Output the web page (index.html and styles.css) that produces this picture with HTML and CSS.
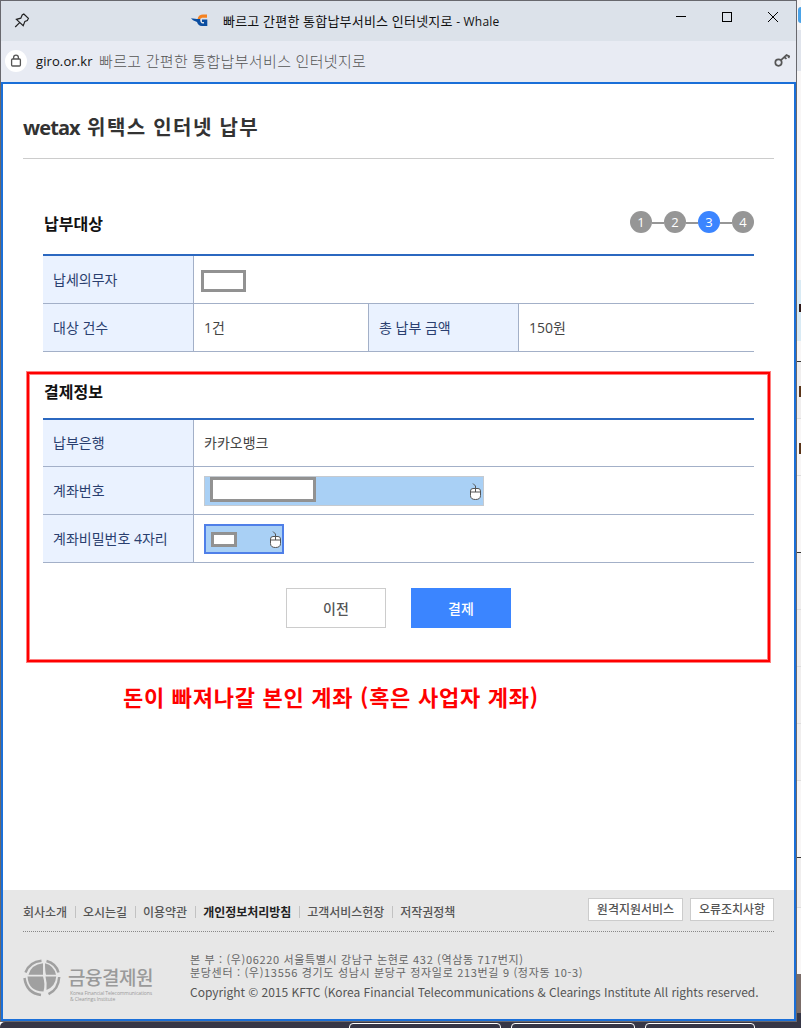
FILE: index.html
```html
<!DOCTYPE html>
<html lang="ko">
<head>
	<meta charset="UTF-8">
	<title>빠르고 간편한 통합납부서비스 인터넷지로</title>
	<link rel="stylesheet" href="styles.css">
</head>
<body>
<div class="screen">
	<div class="window">
		<header class="titlebar">
			<svg class="pin" width="16" height="16" viewBox="0 0 16 16"><path d="M9.8 1 L14.4 5.4 L13.3 7.6 L10.9 8.4 L9.2 12.8 L2.400 6.400 L6.800 5.200 L8.200 2 Z M5.400 9.800 L1.200 14"/></svg>
			<svg class="favicon" width="17" height="14" viewBox="0 0 17 14"><path class="org" d="M6.5 5.2 C7 2 9.5 .6 12 .6 H16 V3.8 H12 C10.4 3.8 9.8 4.4 9.2 5.2 Z"/><path class="blu" d="M0 4.2 L6 5 H9.2 C9 8 10 9.400 12 9.400 H13 V8 H11 V5.5 H16.3 V12 H11 C8 12 6.6 10 6 8 L2 6.2 Z"/></svg>
			<h1 class="tit">빠르고 간편한 통합납부서비스 인터넷지로 <span>- Whale</span></h1>
			<div class="ctrl">
				<svg width="12" height="12" viewBox="0 0 12 12"><path d="M1 5.5 H11"/></svg>
				<svg width="12" height="12" viewBox="0 0 12 12"><rect x="1.5" y="1.5" width="9" height="9"/></svg>
				<svg width="12" height="12" viewBox="0 0 12 12"><path d="M1 1 L11 11 M11 1 L1 11"/></svg>
			</div>
		</header>
		<div class="address">
			<span class="lock"><svg width="12" height="14" viewBox="0 0 12 14"><rect x="1.6" y="5" width="8.8" height="7" rx="1"/><path d="M3.6 5 V3.6 A2.4 2.4 0 0 1 8.4 3.6 V5"/></svg></span>
			<span class="host">giro.or.kr</span>
			<span class="desc">빠르고 간편한 통합납부서비스 인터넷지로</span>
			<svg class="key" width="16" height="15" viewBox="0 0 16 15"><circle cx="4.500" cy="9.600" r="3.200"/><path d="M7 7.200 L12.500 2 L15.200 3.400 L14.400 5 M10.600 4 L12.400 6"/></svg>
		</div>
		<div class="page">
			<main>
				<h2>wetax <span>위택스 인터넷 납부</span></h2>
				<section class="target">
					<div class="head">
						<h3>납부대상</h3>
						<ol class="step">
							<li>1</li>
							<li>2</li>
							<li class="on">3</li>
							<li>4</li>
						</ol>
					</div>
					<table>
						<colgroup><col class="c1"><col class="c2"><col class="c3"><col></colgroup>
						<tr><th>납세의무자</th><td colspan="3"><span class="mask m1"></span></td></tr>
						<tr><th>대상 건수</th><td>1건</td><th class="mid">총 납부 금액</th><td>150원</td></tr>
					</table>
				</section>
				<section class="pay">
					<h3>결제정보</h3>
					<table>
						<colgroup><col class="c1"><col></colgroup>
						<tr class="first"><th>납부은행</th><td>카카오뱅크</td></tr>
						<tr><th>계좌번호</th><td>
							<div class="field">
								<span class="mask m2"></span>
								<svg class="mouse" width="13" height="18" viewBox="0 0 13 18"><path class="body" d="M1.5 8 Q1.5 5.5 4 5.5 H9 Q11.5 5.5 11.5 8 V12.5 Q11.5 16.5 6.5 16.5 Q1.5 16.5 1.5 12.5 Z"/><path d="M1.5 9 H11.5 M6.5 9 V3 L4 .5"/></svg>
							</div>
						</td></tr>
						<tr><th>계좌비밀번호 4자리</th><td>
							<div class="field pw">
								<span class="mask m3"></span>
								<svg class="mouse" width="13" height="18" viewBox="0 0 13 18"><path class="body" d="M1.5 8 Q1.5 5.5 4 5.5 H9 Q11.5 5.5 11.5 8 V12.5 Q11.5 16.5 6.5 16.5 Q1.5 16.5 1.5 12.5 Z"/><path d="M1.5 9 H11.5 M6.5 9 V3 L4 .5"/></svg>
							</div>
						</td></tr>
					</table>
					<div class="btns">
						<button type="button">이전</button>
						<button type="button" class="blue">결제</button>
					</div>
				</section>
				<p class="note">돈이 빠져나갈 본인 계좌 (혹은 사업자 계좌)</p>
			</main>
			<footer>
				<div class="foot-top">
					<ul>
						<li>회사소개</li>
						<li>오시는길</li>
						<li>이용약관</li>
						<li class="strong">개인정보처리방침</li>
						<li>고객서비스헌장</li>
						<li>저작권정책</li>
					</ul>
					<div class="links">
						<a class="remote">원격지원서비스</a>
						<a class="error">오류조치사항</a>
					</div>
				</div>
				<div class="foot-btm">
					<div class="logo">
						<svg width="38" height="38" viewBox="0 0 38 38">
							<path d="M20 4.200 V15.800 H5.500 Q8 5.500 20 4.200 Z M22 4.200 Q31 6.500 33 15.800 H23 Q22 12 22 4.200 Z M4.500 17.600 H20 Q22.500 25 20.500 32.500 Q5.500 32.500 4.500 17.600 Z M22.500 17.600 H33.200 Q32.500 27.500 23.500 31 Q24.200 24 22.500 17.600 Z"/>
							<path class="arc" d="M2.500 13.500 Q6.500 3 18.500 1.800 M23.500 2 Q33 4.500 35.500 13.500 M1.500 19 Q3.500 34 18 36 M36.200 18 Q35.500 30.500 25.500 35.200"/>
						</svg>
						<div>
							<strong>금융결제원</strong>
							<small>Korea Financial Telecommunications<br>&amp; Clearings Institute</small>
						</div>
					</div>
					<address>
						<p class="a1">본 부 : (우)06220 서울특별시 강남구 논현로 432 (역삼동 717번지)</p>
						<p class="a2">분당센터 : (우)13556 경기도 성남시 분당구 정자일로 213번길 9 (정자동 10-3)</p>
						<p class="copy">Copyright © 2015 KFTC (Korea Financial Telecommunications &amp; Clearings Institute All rights reserved.</p>
					</address>
				</div>
			</footer>
		</div>
	</div>
	<!-- the page behind the popup -->
	<div class="behind">
		<i class="b1"></i>
		<i class="b2"></i>
		<i class="b3"></i>
		<i class="b4"><b></b></i>
		<i class="b5"></i>
		<i class="row g"><b></b></i>
		<i class="row"><b></b></i>
		<i class="row tall dark"></i>
		<i class="row g"></i>
		<i class="row g"></i>
		<i class="row g"></i>
		<i class="row g"></i>
		<i class="row tall dark"></i>
		<i class="row last g"></i>
		<i class="b9"></i>
		<i class="b10"></i>
		<i class="b11"></i>
	</div>
	<div class="under">
		<i class="u1"></i><i class="u2"></i><i class="u3"></i>
	</div>
	<div class="redbox"></div>
</div>
</body>
</html>
```
FILE: styles.css
```css
* {
	box-sizing: border-box;
}
body, h1, h2, h3, p, ul, ol {
	margin: 0;
	padding: 0;
}
body {
	font-family: "Open Sans", "Noto Sans CJK KR", sans-serif;
	font-size: 13px;
	color: #444;
	white-space: nowrap;
}
li {
	list-style: none;
}
svg {
	display: block;
	fill: none;
	stroke: #222;
}
.screen {
	position: relative;
	display: grid;
	grid-template-columns: 797px 4px;
	grid-template-rows: 1022px 6px;
	width: 801px;
	height: 1028px;
	overflow: hidden;
}
.window {
	display: flex;
	flex-direction: column;
	border: 1px solid #68686e;
}
.titlebar {
	display: flex;
	align-items: center;
	height: 40px;
	background: #dce2ea;
}
.pin {
	margin-left: 13px;
}
.pin path {
	stroke-width: 1.2;
}
.favicon {
	margin: 0 15px 0 161px;
	stroke: none;
}
.org {
	fill: #f58220;
}
.blu {
	fill: #0b4da0;
}
.tit {
	width: 288px;
	padding-top: 1px;
	font-size: 13px;
	font-weight: 400;
	letter-spacing: .2px;
	color: #111;
	line-height: 20px;
}
.tit span {
	font-size: 12px;
}
.ctrl {
	display: flex;
	gap: 34px;
	margin-left: 164px;
	padding-bottom: 8px;
}
.ctrl svg {
	stroke: #000;
}
.address {
	display: flex;
	align-items: center;
	height: 41px;
	padding-bottom: 2px;
	background: #e8ebf3;
}
.lock {
	display: flex;
	align-items: center;
	justify-content: center;
	width: 22px;
	height: 22px;
	margin: 0 9px 0 4px;
	border-radius: 50%;
	background: #fff;
}
.lock svg, .key {
	stroke: #555;
	stroke-width: 1.3;
}
.key {
	margin: 0 6px 0 auto;
	stroke-width: 1.7;
}
.host {
	width: 63px;
	font-size: 13px;
	letter-spacing: .1px;
	color: #111;
}
.desc {
	font-size: 15px;
	font-weight: 300;
	letter-spacing: .34px;
	color: #555;
}
.page {
	display: flex;
	flex-direction: column;
	flex: 1;
	border: 2px solid #1a6fd8;
	background: #fff;
}
main {
	flex: 1;
	padding: 0 20px;
}
h2 {
	height: 75px;
	padding-top: 28px;
	border-bottom: 1px solid #ccc;
	font-size: 20px;
	line-height: 32px;
	letter-spacing: -.9px;
	color: #333;
}
h2 span {
	margin-left: 3px;
	letter-spacing: 1.45px;
}
section {
	padding: 0 20px;
}
.head {
	display: flex;
	justify-content: space-between;
	height: 95px;
	padding-top: 52px;
}
h3 {
	padding-left: 1px;
	font-size: 16px;
	line-height: 26px;
	color: #111;
}
.step {
	display: flex;
}
.step li {
	display: flex;
	align-items: center;
	justify-content: center;
	width: 22px;
	height: 22px;
	border-radius: 50%;
	background: #969696;
	font-size: 13px;
	color: #fff;
}
.step li + li {
	margin-left: 12px;
}
.step li:not(:last-child):after {
	content: '';
	flex: none;
	width: 12px;
	height: 2px;
	margin: 2px -19px 0 7px;
	background: #969696;
}
.step .on {
	background: #3b85ff;
}
table {
	width: 711px;
	border-collapse: separate;
	border-spacing: 0;
	border-top: 2px solid #2b68c0;
	table-layout: fixed;
}
.c1 {
	width: 151px;
}
.c2 {
	width: 174px;
}
.c3 {
	width: 151px;
}
th, td {
	height: 48px;
	padding: 0 10px;
	border-bottom: 1px solid #a3b0c8;
	font-size: 14px;
	font-weight: 400;
	line-height: 20px;
	text-align: left;
}
.first th, .first td {
	height: 47px;
}
th {
	border-right: 1px solid #a3b0c8;
	background: #eaf2ff;
	color: #2a3f6f;
}
th.mid {
	border-left: 1px solid #a3b0c8;
}
.mask {
	display: block;
	border: 3px solid #929292;
	background: #fff;
	outline: 1px solid rgba(146, 146, 146, .4);
	outline-offset: -1px;
}
.m1 {
	width: 45px;
	height: 22px;
	margin: 3px 0 0 -3px;
}
.pay {
	height: 310px;
}
.pay h3 {
	height: 66px;
	padding-top: 27px;
}
.field {
	display: flex;
	justify-content: space-between;
	width: 280px;
	height: 30px;
	border: 1px solid #c5cad0;
	background: #a9d0f5;
}
.m2 {
	width: 106px;
	height: 25px;
	margin: 0 0 0 5px;
}
.mouse {
	margin: 6px 1px 0 0;
	stroke: #555;
}
.body {
	fill: #fff;
}
.pw {
	width: 80px;
	border: 2px solid #4f7fe8;
}
.m3 {
	width: 26px;
	height: 15px;
	margin: 6px 0 0 5px;
}
.pw .mouse {
	margin: 5px 0 0;
}
.btns {
	display: flex;
	justify-content: center;
	gap: 25px;
	margin-top: 25px;
}
button {
	width: 100px;
	height: 40px;
	padding: 0 0 1px;
	border: 1px solid #ccc;
	background: #fff;
	font: 500 14px "Noto Sans CJK KR", sans-serif;
	color: #555;
}
button.blue {
	border: 0;
	background: #3b85ff;
	color: #fff;
}
.note {
	margin: 18px 0 0 100px;
	font-family: "Noto Sans CJK KR", sans-serif;
	font-size: 22px;
	font-weight: 700;
	line-height: 32px;
	letter-spacing: .72px;
	color: #f00;
}
footer {
	height: 129px;
	padding: 0 20px;
	background: #e7e7e7;
}
.foot-top {
	display: flex;
	justify-content: space-between;
	height: 42px;
	padding-top: 8px;
	border-bottom: 1px dotted #888;
}
.foot-top ul {
	display: flex;
	padding-top: 8px;
}
.foot-top li {
	display: flex;
	height: 12px;
	align-items: center;
	font-size: 12px;
	font-weight: 500;
	letter-spacing: -.03px;
	color: #555;
}
.foot-top li + li:before {
	content: '';
	width: 1px;
	height: 12px;
	margin: 0 7px 0 8px;
	background: #c2c2c2;
}
.foot-top .strong {
	font-weight: 700;
	color: #222;
}
.links {
	display: flex;
	gap: 7px;
}
.links a {
	height: 23px;
	padding-top: 1px;
	border: 1px solid #ccc;
	background: #fff;
	font-size: 12px;
	font-weight: 500;
	line-height: 20px;
	text-align: center;
	color: #555;
}
.remote {
	width: 95px;
}
.error {
	width: 84px;
}
.foot-btm {
	display: flex;
}
.logo {
	display: flex;
	width: 167px;
	padding-top: 27px;
}
.logo svg {
	fill: #a0a0a0;
	stroke: none;
}
.logo .arc {
	fill: none;
	stroke: #a0a0a0;
	stroke-width: 2.5;
}
.logo div {
	padding: 9px 0 0 7px;
}
.logo strong, .logo small {
	display: block;
	color: #9a9a9a;
}
.logo strong {
	font-size: 19px;
	font-weight: 500;
	line-height: 21px;
	letter-spacing: -.5px;
}
.logo small {
	padding: 1px 0 0 2px;
	font-size: 5px;
	line-height: 6px;
	letter-spacing: -.09px;
}
address {
	padding-top: 21px;
	font-family: "Noto Sans CJK KR", sans-serif;
	font-style: normal;
	font-size: 11px;
	line-height: 13px;
	color: #666;
}
.a1 {
	letter-spacing: .65px;
}
.a2 {
	letter-spacing: .68px;
}
.copy {
	margin-top: 6px;
	font-size: 12px;
	letter-spacing: -.02px;
	color: #555;
}
.behind {
	display: flex;
	flex-direction: column;
	background: #f8f6f6;
}
.behind i {
	flex: none;
	display: block;
}
.behind b {
	display: block;
	width: 2px;
	height: 11px;
	margin-left: auto;
	background: #5a3418;
}
.b1 {
	height: 16px;
	margin: 7px 0 7px 1px;
	background: #4aa3e8;
	border-radius: 3px 0 0 3px;
}
.b2 {
	height: 41px;
	background: #e0e4ec;
}
.b3 {
	height: 209px;
}
.b4 {
	height: 61px;
	padding-top: 24px;
	background: #d8eaf4;
}
.behind .b4 b {
	height: 8px;
	background: #301818;
}
.b5 {
	height: 21px;
	border-bottom: 1px solid #333;
}
.row {
	height: 57px;
	padding-top: 24px;
	border-bottom: 1px solid #ddd;
}
.tall {
	height: 77px;
}
.g {
	background: #f0eeee;
}
.dark {
	border-bottom-color: #333;
}
.last {
	height: 50px;
}
.b9 {
	height: 66px;
}
.b10 {
	height: 39px;
	background: #7a6c68;
}
.b11 {
	height: 9px;
	background: #363646;
}
.under {
	grid-column: 1 / 3;
	display: flex;
	padding-left: 349px;
	border-radius: 5px 0 0;
	background: #363646;
}
.under i {
	height: 12px;
	margin-top: 1px;
	border: 1px solid #fff;
	border-radius: 4px;
}
.u1 {
	width: 152px;
}
.u2 {
	width: 124px;
	margin-left: 10px;
}
.u3 {
	width: 110px;
	margin-left: 10px;
}
/* marks the block to fill in */
.redbox {
	position: absolute;
	left: 27px;
	top: 372px;
	width: 743px;
	height: 290px;
	border: 2px solid #f00;
	box-shadow: 0 0 0 1px #ff8080, inset 0 0 0 1px #ff8080;
}
```
